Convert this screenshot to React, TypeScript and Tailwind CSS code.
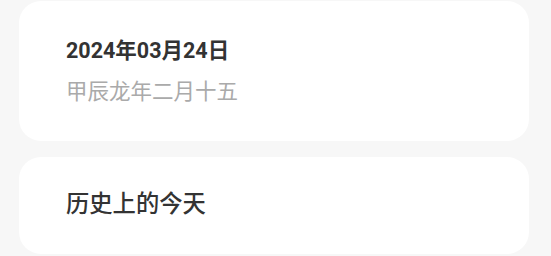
import React from "react";

export default function App() {
  const font = { fontFamily: 'Roboto, "Noto Sans CJK SC", sans-serif' };
  return (
    <div className="w-[551px] h-[256px] bg-[#f7f7f7] overflow-hidden" style={font}>
      <div className="flex flex-col gap-4 pl-[19px] pr-[22px] pt-px">
        <div className="h-[140px] bg-white rounded-[22px] pl-[47px] pt-[36px]">
          <div className="text-[21.5px] leading-[28px] font-bold text-[#333333]">2024年03月24日</div>
          <div className="text-[21.5px] leading-[28px] mt-[13px] text-[#aaaaaa]">甲辰龙年二月十五</div>
        </div>
        <div className="h-[97px] bg-white rounded-[22px] pl-[47px] pt-[31px]">
          <div className="text-[23.3px] leading-[32px] font-medium text-[#333333]">历史上的今天</div>
        </div>
      </div>
    </div>
  );
}
